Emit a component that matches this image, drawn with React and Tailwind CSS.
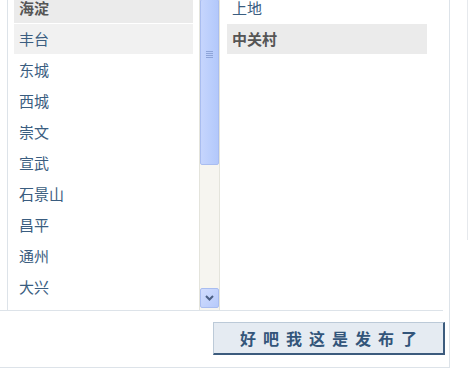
import React from "react";

const left = [
  { t: "海淀", sel: true },
  { t: "丰台", hover: true },
  { t: "东城" },
  { t: "西城" },
  { t: "崇文" },
  { t: "宣武" },
  { t: "石景山" },
  { t: "昌平" },
  { t: "通州" },
  { t: "大兴" },
];

const right = [{ t: "上地" }, { t: "中关村", sel: true }];

function Item({ t, sel, hover }) {
  return (
    <div
      className={
        "h-[30px] mb-[1.1px] flex items-center pl-[5px] pb-[2px] text-[15px] leading-none " +
        (sel
          ? "bg-[#ebebeb] text-[#555555] font-bold"
          : hover
          ? "bg-[#f1f1f1] text-[#3a5d80]"
          : "text-[#3a5d80]")
      }
    >
      {t}
    </div>
  );
}

export default function App() {
  return (
    <div
      className="relative w-[468px] h-[379px] bg-white overflow-hidden"
      style={{ fontFamily: '"Noto Sans CJK SC", "Noto Sans", sans-serif' }}
    >
      <div className="absolute left-[467px] top-0 w-px h-[240px] bg-[#e6e9ed]" />
      <div className="w-[450px] h-[368px] border-r border-b border-[#dde3e9] flex flex-col">
        <div className="h-[311px] mr-[6px] border-b border-[#dde3e9] pl-[7px] flex">
          <div className="w-[192px] h-full border-l border-[#dde3e9] overflow-hidden pl-[6px] pr-[6px]">
            <div className="-mt-[7px]">
              {left.map((it) => (
                <Item key={it.t} {...it} />
              ))}
            </div>
          </div>
          <div className="w-[21px] h-[310px] bg-[#f6f5f0] border-l border-r border-[#e4e4dc] flex flex-col justify-between pb-[2px]">
            <div className="h-[166px] rounded-[2px] border border-[#a9bdf0] bg-gradient-to-r from-[#c6d5fd] via-[#bccffc] to-[#b3c8fb] flex items-center justify-center -mt-[1px]">
              <div className="flex flex-col gap-[1px] -mt-[56px]">
                <div className="w-[7px] h-px bg-[#8ea4d8]" />
                <div className="w-[7px] h-px bg-[#8ea4d8]" />
                <div className="w-[7px] h-px bg-[#8ea4d8]" />
                <div className="w-[7px] h-px bg-[#8ea4d8]" />
              </div>
            </div>
            <div className="h-[20px] rounded-[2px] border border-[#a9bdf0] bg-gradient-to-br from-[#d2ddfd] to-[#b6cafb] flex items-center justify-center">
              <svg width="9" height="6" viewBox="0 0 9 6">
                <path d="M1 1 L4.5 4.5 L8 1" stroke="#4d6185" strokeWidth="2" fill="none" />
              </svg>
            </div>
          </div>
          <div className="w-[221px] h-full overflow-hidden pl-[7px] pr-[14px]">
            <div className="-mt-[7px]">
              {right.map((it) => (
                <Item key={it.t} {...it} />
              ))}
            </div>
          </div>
        </div>
        <div className="flex justify-end pr-[4px] pt-[11px]">
          <button className="w-[232px] h-[33px] bg-[#e5ebf2] border border-t-[#bccad8] border-l-[#bccad8] border-r-[#3c5b7d] border-b-[#3c5b7d] border-r-2 border-b-2 text-[#33557a] font-bold text-[16px] tracking-[7px] pl-[7px] flex items-center justify-center leading-none">
            好吧我这是发布了
          </button>
        </div>
      </div>
    </div>
  );
}
